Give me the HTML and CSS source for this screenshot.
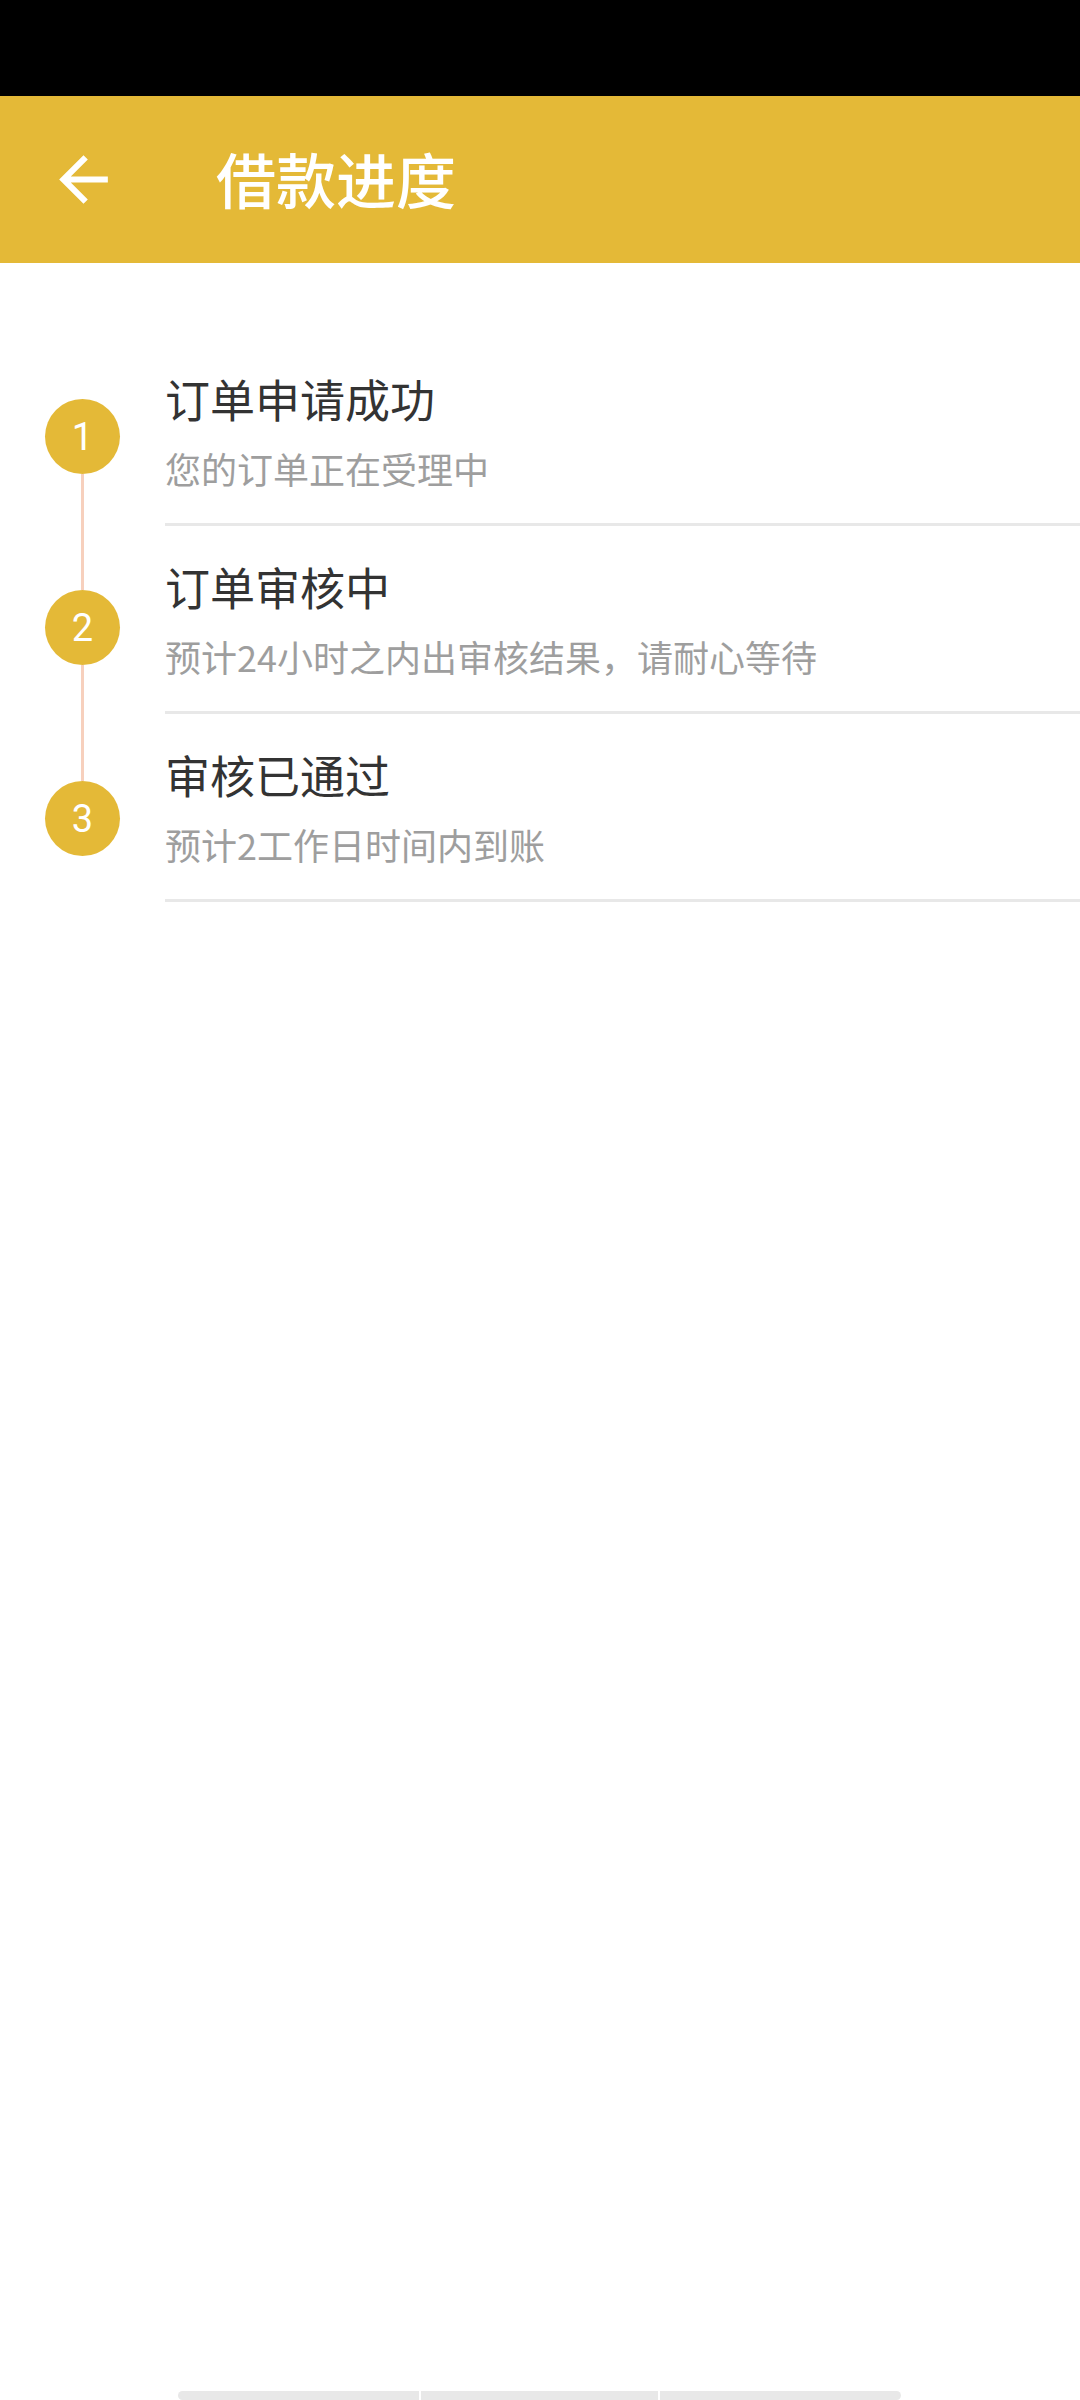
FILE: index.html
```html
<!DOCTYPE html>
<html lang="zh-CN">
<head>
    <meta charset="UTF-8">
    <meta name="viewport" content="width=device-width, initial-scale=1.0">
    <title>借款进度</title>
    <link rel="stylesheet" href="styles.css">
</head>
<body>
    <div class="status-bar"></div>

    <div class="header">
        <button class="back" aria-label="返回">
            <svg viewBox="0 0 24 24" width="73" height="73"><path fill="#fff" d="M20 11H7.83l5.59-5.59L12 4l-8 8 8 8 1.41-1.41L7.83 13H20v-2z"/></svg>
        </button>
        <h1 class="title">借款进度</h1>
    </div>

    <ul class="steps">
        <li class="step">
            <div class="marker">
                <span class="line"></span>
                <span class="dot">1</span>
                <span class="line"></span>
            </div>
            <div class="info">
                <h2>订单申请成功</h2>
                <p>您的订单正在受理中</p>
            </div>
        </li>
        <li class="step">
            <div class="marker">
                <span class="line"></span>
                <span class="dot">2</span>
                <span class="line"></span>
            </div>
            <div class="info">
                <h2>订单审核中</h2>
                <p>预计24小时之内出审核结果，请耐心等待</p>
            </div>
        </li>
        <li class="step">
            <div class="marker">
                <span class="line"></span>
                <span class="dot">3</span>
                <span class="line"></span>
            </div>
            <div class="info">
                <h2>审核已通过</h2>
                <p>预计2工作日时间内到账</p>
            </div>
        </li>
    </ul>

    <div class="home-bar">
        <span></span>
        <span></span>
        <span></span>
    </div>
</body>
</html>
```

FILE: styles.css
```css
* {
    margin: 0;
    padding: 0;
    box-sizing: border-box;
}

body {
    width: 1080px;
    height: 2400px;
    font-family: "Noto Sans CJK SC", "Noto Sans", sans-serif;
    background-color: #fff;
    display: flex;
    flex-direction: column;
    overflow: hidden;
}

/* Barra de estado */
.status-bar {
    height: 96px;
    background-color: #000;
}

/* Cabecera */
.header {
    height: 167px;
    background-color: #e4b937;
    display: flex;
    align-items: center;
}

.back {
    width: 166px;
    height: 100%;
    background: none;
    border: none;
    display: flex;
    align-items: center;
    padding-left: 47px;
}

.title {
    margin-left: 50px;
    font-size: 60px;
    font-weight: 500;
    color: #fff;
    line-height: 1;
    padding-bottom: 4px;
}

/* Lista de pasos */
.steps {
    list-style: none;
    padding-top: 75px;
    flex: 1;
}

.step {
    display: flex;
    height: 188px;
}

.marker {
    width: 165px;
    padding-left: 45px;
    display: flex;
    flex-direction: column;
}

.line {
    width: 3px;
    margin-left: 36px;
    background-color: #f7d0bd;
}

.line:first-child {
    height: 61px;
}

.step:nth-child(2) .line:first-child {
    height: 64px;
}

.step:nth-child(3) .line:first-child {
    height: 67px;
}

.line:last-child {
    flex: 1;
}

.step:first-child .line:first-child,
.step:last-child .line:last-child {
    background-color: transparent;
}

.dot {
    width: 75px;
    height: 75px;
    flex-shrink: 0;
    border-radius: 50%;
    background-color: #e4b937;
    color: #fff;
    font-family: Roboto, "Noto Sans", sans-serif;
    font-size: 38px;
    display: flex;
    justify-content: center;
    align-items: center;
}

.info {
    flex: 1;
    padding-top: 31px;
    border-bottom: 3px solid #e8e8e8;
}

.info h2 {
    font-size: 45px;
    font-weight: 400;
    line-height: 60px;
    color: #333;
}

.info p {
    margin-top: 14px;
    font-size: 36px;
    line-height: 50px;
    color: #9e9e9e;
}

/* Barra inferior */
.home-bar {
    display: flex;
    gap: 2px;
    padding-left: 178px;
    height: 9px;
}

.home-bar span {
    height: 9px;
    background-color: #e8e8e8;
}

.home-bar span:nth-child(1) {
    width: 241px;
    border-radius: 5px 0 0 5px;
}

.home-bar span:nth-child(2) {
    width: 237px;
}

.home-bar span:nth-child(3) {
    width: 241px;
    border-radius: 0 5px 5px 0;
}
```
